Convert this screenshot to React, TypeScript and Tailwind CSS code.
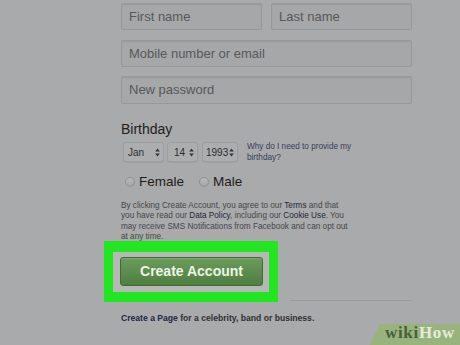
import { ReactNode } from "react";

function Field({ label, className = "" }: { label: string; className?: string }) {
    return (
        <div
            className={`h-[27px] flex items-center pl-[7px] bg-[#a6a7a8] border border-[#97989a] rounded-[2px] shadow-[inset_0_1px_1px_rgba(0,0,0,0.08)] text-[13px] text-[#56585a] ${className}`}
        >
            {label}
        </div>
    );
}

function Arrows() {
    return (
        <svg width="5" height="9" viewBox="0 0 5 9" className="shrink-0">
            <path d="M2.5 0.5 L4.8 3.6 L0.2 3.6 Z" fill="#333" />
            <path d="M2.5 8.5 L4.8 5.4 L0.2 5.4 Z" fill="#333" />
        </svg>
    );
}

function Select({ value, className, pad }: { value: string; className: string; pad: string }) {
    return (
        <div
            className={`h-[20px] flex items-center justify-between ${pad} pr-[3px] bg-[#acadae] border border-[#9d9ea0] rounded-[3px] shadow-[0_1px_0_rgba(0,0,0,0.06)] text-[10px] text-[#2c2c2c] ${className}`}
        >
            <span>{value}</span>
            <Arrows />
        </div>
    );
}

function Radio({ children }: { children: ReactNode }) {
    return (
        <div className="flex items-center">
            <span className="w-[10px] h-[10px] rounded-full border border-[#8e8f91] bg-gradient-to-b from-[#b9babb] to-[#a4a5a6]" />
            <span className="ml-[4px] text-[13.5px] leading-[16px] text-[#1c1c1c]">{children}</span>
        </div>
    );
}

export default function App() {
    return (
        <div
            className="relative w-[460px] h-[345px] overflow-hidden bg-[#a9aaab]"
            style={{ fontFamily: '"Liberation Sans", Arial, sans-serif' }}
        >
            <div className="w-[291px] ml-[121px] pt-[3px] flex flex-col">
                <div className="flex gap-[9px]">
                    <Field label="First name" className="w-[141px] h-[26px]" />
                    <Field label="Last name" className="w-[141px] h-[26px]" />
                </div>
                <Field label="Mobile number or email" className="mt-[10px]" />
                <Field label="New password" className="mt-[9px] h-[28px]" />

                <div className="mt-[17px] text-[14px] leading-[16px] text-[#1e1e1e]">Birthday</div>

                <div className="mt-[5px] flex items-start">
                    <div className="flex gap-[3px] ml-[2px]">
                        <Select value="Jan" className="w-[41px]" pad="pl-[4px]" />
                        <Select value="14" className="w-[31px]" pad="pl-[6px]" />
                        <Select value="1993" className="w-[36px] ml-[1px]" pad="pl-[3px]" />
                    </div>
                    <p className="ml-[9px] -mt-[1px] text-[8.2px] leading-[11px] text-[#36415c]">
                        Why do I need to provide my
                        <br />
                        birthday?
                    </p>
                </div>

                <div className="mt-[11px] ml-[4px] flex items-center gap-[15px]">
                    <Radio>Female</Radio>
                    <Radio>Male</Radio>
                </div>

                <p className="mt-[11px] text-[8.2px] leading-[10.3px] text-[#45474a] whitespace-nowrap">
                    By clicking Create Account, you agree to our <span className="text-[#1f2838]">Terms</span> and that
                    <br />
                    you have read our <span className="text-[#1f2838]">Data Policy</span>, including our{" "}
                    <span className="text-[#1f2838]">Cookie Use</span>. You
                    <br />
                    may receive SMS Notifications from Facebook and can opt out
                    <br />
                    at any time.
                </p>

                <div className="flex items-end -mt-[1px]">
                    <div className="-ml-[17px] w-[174px] h-[61px] border-[9px] border-[#22e622] border-t-[11px] border-b-[10px] bg-[#b6b8b6] pl-[7px] pt-[5px]">
                        <div className="w-[143px] h-[29px] rounded-[3px] border border-[#3f6b35] bg-gradient-to-b from-[#6b9c5b] to-[#4e7f41] flex items-center justify-center text-[14px] font-bold text-[#eef3ea] shadow-[inset_0_1px_0_rgba(255,255,255,0.15)]">
                            Create Account
                        </div>
                    </div>
                    <div className="flex-1 ml-[12px] mb-[1px] h-px bg-[#9b9c9d]" />
                </div>

                <p className="mt-[11px] text-[8.6px] leading-[10px] font-bold text-[#2f3033] whitespace-nowrap">
                    <span className="text-[#1d2747]">Create a Page</span> for a celebrity, band or business.
                </p>
            </div>

            <div className="absolute right-0 bottom-0 w-[90px] h-[21px] bg-[#98b47c] rounded-tl-[14px] [clip-path:polygon(11%_0,100%_0,100%_100%,0_100%)]" />
            <div
                className="absolute right-[5px] bottom-[4px] text-[17px] leading-[16px] font-bold tracking-[0.7px]"
                style={{ fontFamily: '"Liberation Serif", "Times New Roman", serif' }}
            >
                <span className="text-[#4a5e3d]">wiki</span>
                <span className="text-[#e4ebdc]">How</span>
            </div>
        </div>
    );
}
